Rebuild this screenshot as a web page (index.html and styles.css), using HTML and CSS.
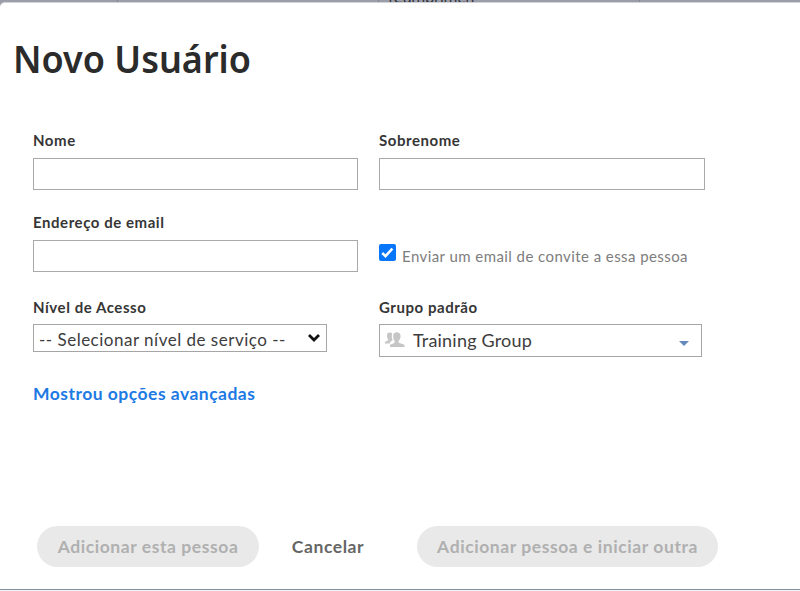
FILE: index.html
```html
<!DOCTYPE html>
<html lang="pt-BR">
<head>
<meta charset="utf-8">
<title>Novo Usuário</title>
<link rel="stylesheet" href="styles.css">
</head>
<body>
<div class="backdrop"><i class="tick first"></i><i class="tick second"></i><span class="behind">(Cumprimer(</span><i class="tick third"></i></div>
<main class="modal">
  <h1><span>Novo Usuário</span></h1>
  <form class="fields">
    <div class="field">
      <label for="nome">Nome</label>
      <input class="text" id="nome" type="text">
    </div>
    <div class="field">
      <label for="sobrenome">Sobrenome</label>
      <input class="text" id="sobrenome" type="text">
    </div>
    <div class="field">
      <label for="email">Endereço de email</label>
      <input class="text" id="email" type="text">
    </div>
    <div class="field invite">
      <svg class="check" viewBox="0 0 17 17"><rect width="17" height="17" rx="2" fill="#0876f8"/><path d="M3.2 9 6.5 12.2 13.4 4.6" fill="none" stroke="#fff" stroke-width="2.5"/></svg>
      <span class="note">Enviar um email de convite a essa pessoa</span>
    </div>
    <div class="field low">
      <label>Nível de Acesso</label>
      <div class="select"><span>-- Selecionar nível de serviço --</span>
        <svg class="chevron" viewBox="0 0 14 10"><path d="M2 2 7 7 12 2" fill="none" stroke="#111" stroke-width="2.8"/></svg>
      </div>
    </div>
    <div class="field low">
      <label>Grupo padrão</label>
      <div class="group">
        <svg class="people" viewBox="0 0 20 16" fill="#c6c6c6"><path d="M0 11.500V10l3.500-2C2.200 6.500 1.900 4.500 2 3 2.200 1 3.400.4 4.900.4c1.200 0 2 .4 2.300 1.300C6.500 4 6.800 6.500 7.700 8L5.200 10 4.600 11.500Z"/><path d="M5 15v-2c1.200-.9 3-1.200 4.600-2.200V9C8.500 7.200 8 5.300 8.200 3.400 8.400 1.300 9.800.2 11.800.2s3.500 1.100 3.700 3.200c.2 2-.4 3.900-1.900 5.600v1.800c2.200.9 4.400 1.200 5.900 2.200v2Z"/></svg>
        <span class="g-text">Training Group</span><i class="caret"></i>
      </div>
    </div>
  </form>
  <a class="advanced"><span>Mostrou opções avançadas</span></a>
  <footer>
    <button class="pill b-add" type="button"><span>Adicionar esta pessoa</span></button>
    <button class="cancel" type="button"><span>Cancelar</span></button>
    <button class="pill b-more" type="button"><span>Adicionar pessoa e iniciar outra</span></button>
  </footer>
</main>
</body>
</html>
```
FILE: styles.css
```css
* { box-sizing: border-box; }
body {
  margin: 0;
  height: 591px;
  overflow: hidden;
  background: #9b9ea8;
  color: #333;
  font-family: Lato, "Liberation Sans", sans-serif;
}
span { white-space: nowrap; }
.backdrop { display: flex; height: 2px; overflow: hidden; }
.tick { width: 1px; height: 3px; background: #858892; flex: none; }
.first { margin-left: 117px; }
.second { margin-left: 260px; }
.behind {
  width: 250px;
  margin: -13px 0 0 10px;
  color: #303138;
  font: 15px/20px "Noto Sans", sans-serif;
  letter-spacing: -.3px;
  flex: none;
}
.modal {
  height: 588px;
  padding: 28px 0 0 33px;
  background: #fff;
  border-top: 1px solid #d2d3d8;
  border-bottom: 1px solid #8390a0;
  border-radius: 5px 0 0 0;
  box-shadow: 0 1px #f4f5f6;
}
h1 {
  height: 99px;
  margin: 0 0 0 -20px;
  color: #2b2b2b;
  font: 600 38px/54px "Noto Sans", sans-serif;
}
h1 span {
  display: inline-block;
  transform: scaleX(.947);
  transform-origin: 0 50%;
}
.fields {
  display: grid;
  grid-template-columns: 326px 326px;
  grid-template-rows: 82px 84px 77px;
  column-gap: 20px;
}
.field label {
  display: block;
  height: 28px;
  color: #363636;
  font-size: 15px;
  font-weight: 700;
  line-height: 20px;
  letter-spacing: .55px;
  white-space: nowrap;
}
.field.low label { padding-top: 1px; }
.text {
  display: block;
  width: 325px;
  height: 32px;
  border: 1px solid #a9a9a9;
  background: #fff;
}
.field:nth-child(2) .text { width: 326px; }
.invite { display: flex; padding-top: 32px; }
.check { width: 17px; height: 17px; }
.note {
  margin: 2px 0 0 6px;
  color: #7d7d7d;
  font-size: 15px;
  line-height: 20px;
  letter-spacing: .43px;
}
.select, .group {
  display: flex;
  align-items: center;
  border: 1px solid #a6a6a6;
}
.select { width: 294px; height: 28px; padding: 2px 5px 0 5px; color: #3d3d3d; font-size: 17px; letter-spacing: .5px; }
.chevron { width: 14px; height: 10px; margin: -3px 0 0 auto; }
.group { width: 323px; height: 33px; padding: 0 12px 0 5px; color: #3d3d3d; font-size: 18px; letter-spacing: .2px; }
.g-text { margin: -2px 0 0 -1px; }
.people { width: 20px; height: 16px; margin: -2px 9px 0 0; }
.caret {
  margin: 6px 0 0 auto;
  border: 5px solid transparent;
  border-top-color: #6589bd;
  border-bottom: 0;
}
.advanced {
  display: block;
  width: 230px;
  height: 24px;
  margin-top: 9px;
  color: #1d7ae4;
  font-size: 17.5px;
  font-weight: 700;
  line-height: 24px;
  letter-spacing: .48px;
}
footer { display: flex; margin: 120px 0 0 4px; }
button {
  height: 41px;
  padding: 0;
  border: 0;
  background: none;
  font: 700 17.5px/40px Lato, sans-serif;
  letter-spacing: .57px;
}
.pill { border-radius: 21px; background: #e9e9e9; color: #b0b0b0; }
.b-add { width: 222px; }
.cancel { width: 76px; margin: 0 51px 0 31px; color: #666; }
.b-more { width: 301px; }
```
